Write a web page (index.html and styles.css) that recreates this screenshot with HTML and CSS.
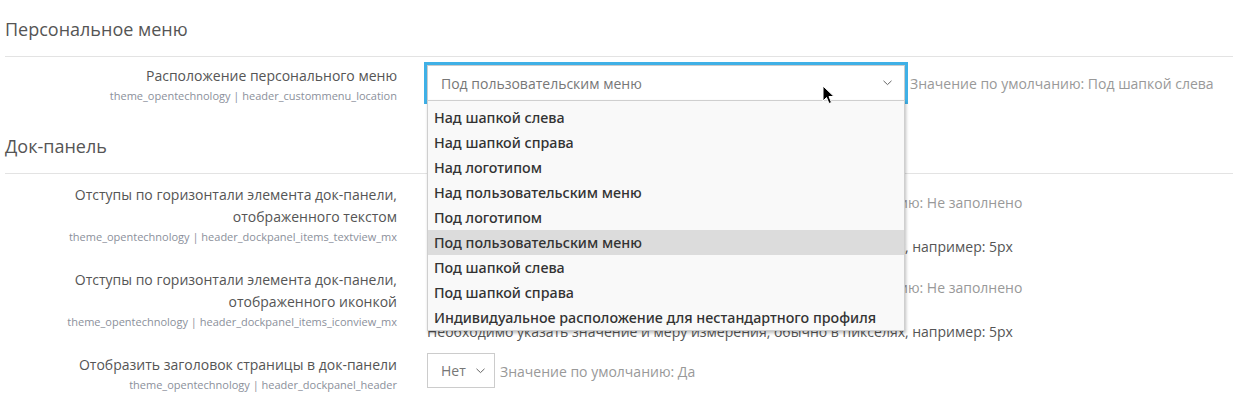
FILE: index.html
```html
<!DOCTYPE html>
<html lang="ru">

<head>
    <meta charset="UTF-8">
    <meta name="viewport" content="width=device-width, initial-scale=1.0">
    <title>Настройки темы</title>
    <link rel="stylesheet" href="styles.css">
</head>

<body>
    <main class="settings">

        <h3 class="section-title">Персональное меню</h3>

        <div class="setting setting-first">
            <div class="setting-label">
                <label>Расположение персонального меню</label>
                <span class="setting-name">theme_opentechnology | header_custommenu_location</span>
            </div>
            <div class="setting-control">
                <div class="select-wrap">
                    <div class="select select-focus">
                        <span>Под пользовательским меню</span>
                        <svg class="chevron" width="9" height="6" viewBox="0 0 9 6"><path d="M0.5 0.8 L4.5 4.6 L8.5 0.8" fill="none" stroke="#666" stroke-width="1"/></svg>
                    </div>
                    <ul class="dropdown">
                        <li>Над шапкой слева</li>
                        <li>Над шапкой справа</li>
                        <li>Над логотипом</li>
                        <li>Над пользовательским меню</li>
                        <li>Под логотипом</li>
                        <li class="active">Под пользовательским меню</li>
                        <li>Под шапкой слева</li>
                        <li>Под шапкой справа</li>
                        <li>Индивидуальное расположение для нестандартного профиля</li>
                    </ul>
                    <svg class="cursor" width="14" height="21" viewBox="0 0 14 21"><path d="M1 1 L1 16 L4.5 12.5 L7 18.5 L9.5 17.5 L7 11.5 L12 11.5 Z" fill="#000" stroke="#fff" stroke-width="1"/></svg>
                </div>
                <span class="default">Значение по умолчанию: Под шапкой слева</span>
            </div>
        </div>

        <h3 class="section-title">Док-панель</h3>

        <div class="setting">
            <div class="setting-label">
                <label>Отступы по горизонтали элемента док-панели, отображенного текстом</label>
                <span class="setting-name">theme_opentechnology | header_dockpanel_items_textview_mx</span>
            </div>
            <div class="setting-control setting-column">
                <div class="control-line">
                    <input class="text-input" type="text">
                    <span class="default">Значение по умолчанию: Не заполнено</span>
                </div>
                <p class="description">Необходимо указать значение и меру измерения, обычно в пикселях, например: 5px</p>
            </div>
        </div>

        <div class="setting">
            <div class="setting-label">
                <label>Отступы по горизонтали элемента док-панели, отображенного иконкой</label>
                <span class="setting-name">theme_opentechnology | header_dockpanel_items_iconview_mx</span>
            </div>
            <div class="setting-control setting-column">
                <div class="control-line">
                    <input class="text-input" type="text">
                    <span class="default">Значение по умолчанию: Не заполнено</span>
                </div>
                <p class="description">Необходимо указать значение и меру измерения, обычно в пикселях, например: 5px</p>
            </div>
        </div>

        <div class="setting">
            <div class="setting-label">
                <label>Отобразить заголовок страницы в док-панели</label>
                <span class="setting-name">theme_opentechnology | header_dockpanel_header</span>
            </div>
            <div class="setting-control">
                <div class="select select-small">
                    <span>Нет</span>
                    <svg class="chevron" width="9" height="6" viewBox="0 0 9 6"><path d="M0.5 0.8 L4.5 4.6 L8.5 0.8" fill="none" stroke="#666" stroke-width="1"/></svg>
                </div>
                <span class="default">Значение по умолчанию: Да</span>
            </div>
        </div>

    </main>
</body>

</html>
```

FILE: styles.css
```css
* {
    margin: 0;
    padding: 0;
    box-sizing: border-box;
}
body{
    font-family: 'Open Sans', 'DejaVu Sans', sans-serif;
    color: #555;
    background: #ffffff;
    overflow: hidden;
}
.settings{
    padding-left: 5px;
}
.section-title{
    font-size: 18px;
    font-weight: normal;
    line-height: 24px;
    color: #555;
    padding: 17px 0 15px;
    border-bottom: 1px solid #e3e3e3;
}
.setting{
    display: flex;
    gap: 30px;
    margin-top: 10px;
    height: 75px;
}
.setting-first{
    margin-top: 8px;
    height: 52px;
}
.setting-label{
    width: 392px;
    flex: none;
    text-align: right;
}
.setting-label label{
    display: block;
    font-size: 14px;
    line-height: 22px;
    color: #555;
}
.setting-name{
    display: block;
    font-size: 11px;
    line-height: 18px;
    color: #8b909b;
}
.setting-control{
    display: flex;
    align-items: center;
    align-self: flex-start;
    gap: 5px;
}
.setting-column{
    flex-direction: column;
    align-items: flex-start;
    gap: 16px;
}
.control-line{
    display: flex;
    align-items: center;
    gap: 5px;
}
.select-wrap{
    position: relative;
}
.select{
    display: flex;
    align-items: center;
    justify-content: space-between;
    height: 36px;
    border: 1px solid #ccc;
    padding: 0 12px 0 13px;
    font-size: 14px;
    color: #777;
    background: #fff;
}
.select-focus{
    width: 478px;
    outline: 3px solid #3fb0e6;
}
.select-small{
    width: 68px;
    height: 35px;
    padding: 0 9px 0 13px;
    margin-top: -1px;
}
.default{
    font-size: 14px;
    color: #999;
    white-space: nowrap;
}
.text-input{
    width: 317px;
    height: 36px;
    border: 1px solid #ccc;
}
.description{
    font-size: 14px;
    line-height: 22px;
    color: #555;
    white-space: nowrap;
}
.dropdown{
    position: absolute;
    top: 35px;
    left: 0;
    width: 478px;
    height: 231px;
    list-style: none;
    padding-top: 4px;
    background: #f9f9f9;
    border: 1px solid #cfcfcf;
    box-shadow: 1px 2px 3px rgba(0, 0, 0, 0.25);
    font-family: 'Noto Sans', 'DejaVu Sans', sans-serif;
    font-weight: 500;
    font-size: 14.3px;
    color: #333;
    z-index: 2;
}
.dropdown li{
    height: 25px;
    line-height: 25px;
    padding-left: 6px;
}
.dropdown .active{
    background: #dcdcdc;
}
.cursor{
    position: absolute;
    left: 395px;
    top: 20px;
    z-index: 3;
}
```
